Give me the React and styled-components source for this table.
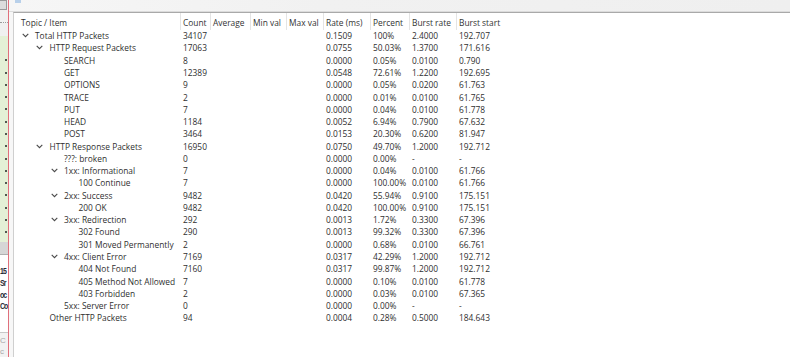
import React from 'react';
import styled, { createGlobalStyle } from 'styled-components';

const GlobalStyle = createGlobalStyle`
  html, body {
    margin: 0;
    padding: 0;
    background: #ffffff;
  }
  body {
    font-family: "Open Sans", "Noto Sans", sans-serif;
  }
`;

const COLS = '166px 30px 40px 36px 37px 47px 39px 47px 1fr';

const HEADERS = ['Topic / Item', 'Count', 'Average', 'Min val', 'Max val', 'Rate (ms)', 'Percent', 'Burst rate', 'Burst start'];

// level, expandable, topic, count, rate, percent, burst rate, burst start
const ROWS = [
  [0, true, 'Total HTTP Packets', '34107', '0.1509', '100%', '2.4000', '192.707'],
  [1, true, 'HTTP Request Packets', '17063', '0.0755', '50.03%', '1.3700', '171.616'],
  [2, false, 'SEARCH', '8', '0.0000', '0.05%', '0.0100', '0.790'],
  [2, false, 'GET', '12389', '0.0548', '72.61%', '1.2200', '192.695'],
  [2, false, 'OPTIONS', '9', '0.0000', '0.05%', '0.0200', '61.763'],
  [2, false, 'TRACE', '2', '0.0000', '0.01%', '0.0100', '61.765'],
  [2, false, 'PUT', '7', '0.0000', '0.04%', '0.0100', '61.778'],
  [2, false, 'HEAD', '1184', '0.0052', '6.94%', '0.7900', '67.632'],
  [2, false, 'POST', '3464', '0.0153', '20.30%', '0.6200', '81.947'],
  [1, true, 'HTTP Response Packets', '16950', '0.0750', '49.70%', '1.2000', '192.712'],
  [2, false, '???: broken', '0', '0.0000', '0.00%', '-', '-'],
  [2, true, '1xx: Informational', '7', '0.0000', '0.04%', '0.0100', '61.766'],
  [3, false, '100 Continue', '7', '0.0000', '100.00%', '0.0100', '61.766'],
  [2, true, '2xx: Success', '9482', '0.0420', '55.94%', '0.9100', '175.151'],
  [3, false, '200 OK', '9482', '0.0420', '100.00%', '0.9100', '175.151'],
  [2, true, '3xx: Redirection', '292', '0.0013', '1.72%', '0.3300', '67.396'],
  [3, false, '302 Found', '290', '0.0013', '99.32%', '0.3300', '67.396'],
  [3, false, '301 Moved Permanently', '2', '0.0000', '0.68%', '0.0100', '66.761'],
  [2, true, '4xx: Client Error', '7169', '0.0317', '42.29%', '1.2000', '192.712'],
  [3, false, '404 Not Found', '7160', '0.0317', '99.87%', '1.2000', '192.712'],
  [3, false, '405 Method Not Allowed', '7', '0.0000', '0.10%', '0.0100', '61.778'],
  [3, false, '403 Forbidden', '2', '0.0000', '0.03%', '0.0100', '67.365'],
  [2, false, '5xx: Server Error', '0', '0.0000', '0.00%', '-', '-'],
  [1, false, 'Other HTTP Packets', '94', '0.0004', '0.28%', '0.5000', '184.643'],
];

const Chevron = () => (
  <svg width="7" height="5" viewBox="0 0 7 5">
    <polyline points="0.7,0.9 3.5,3.7 6.3,0.9" fill="none" stroke="#4a4a4a" strokeWidth="1.1" />
  </svg>
);

const App = () => {
  return (
    <>
      <GlobalStyle />
      <Styled.Screen>
        <Styled.BackWindow>
          <Styled.StripButton />
          <Styled.StripPlain $h={10} />
          <Styled.Dotted />
          <Styled.StripPlain $h={14} />
          <Styled.GreenPane>
            {Array.from({ length: 15 }).map((_, i) => (
              <Styled.Dash key={i} />
            ))}
          </Styled.GreenPane>
          <Styled.GrayBand />
          <Styled.Fragments>
            <span>15</span>
            <span>Sr</span>
            <span>oc</span>
            <span>Co</span>
          </Styled.Fragments>
          <Styled.Faint>
            <span>C</span>
            <span>c</span>
          </Styled.Faint>
        </Styled.BackWindow>

        <Styled.Main>
          <Styled.TitleBar>
            <Styled.TitleIcon />
          </Styled.TitleBar>
          <Styled.Body>
            <Styled.Gutter />
            <Styled.Tree>
              <Styled.Header>
                {HEADERS.map((h, i) => (
                  <Styled.HeadCell key={h} $first={i === 0}>
                    {h}
                  </Styled.HeadCell>
                ))}
              </Styled.Header>
              {ROWS.map(([level, open, topic, count, rate, pct, brate, bstart]) => (
                <Styled.Row key={topic}>
                  <Styled.Topic $level={level}>
                    <Styled.Toggle>{open && <Chevron />}</Styled.Toggle>
                    {topic}
                  </Styled.Topic>
                  <Styled.Cell>{count}</Styled.Cell>
                  <Styled.Cell />
                  <Styled.Cell />
                  <Styled.Cell />
                  <Styled.Cell>{rate}</Styled.Cell>
                  <Styled.Cell>{pct}</Styled.Cell>
                  <Styled.Cell>{brate}</Styled.Cell>
                  <Styled.Cell>{bstart}</Styled.Cell>
                </Styled.Row>
              ))}
            </Styled.Tree>
          </Styled.Body>
        </Styled.Main>
      </Styled.Screen>
    </>
  );
};

const Styled = {
  Screen: styled.div`
    display: flex;
    width: 790px;
    height: 357px;
    overflow: hidden;
    background: #ffffff;
  `,
  BackWindow: styled.div`
    display: flex;
    flex-direction: column;
    width: 8px;
    flex: none;
    border-right: 1px solid #e0707c;
    background: #f2f2f2;
    overflow: hidden;
  `,
  StripButton: styled.div`
    height: 8px;
    margin-right: 1px;
    border: 1px solid #9a9a9a;
    border-left: none;
    background: #dcdcdc;
  `,
  StripPlain: styled.div`
    height: ${(p) => p.$h}px;
    background: #f0f0f0;
  `,
  Dotted: styled.div`
    height: 2px;
    border-bottom: 1px dotted #9a9a9a;
  `,
  GreenPane: styled.div`
    display: flex;
    flex-direction: column;
    align-items: flex-end;
    gap: 10.27px;
    height: 209px;
    padding-top: 23px;
    box-sizing: border-box;
    background: #e4f0d6;
  `,
  Dash: styled.div`
    width: 2px;
    height: 2px;
    margin-right: 1px;
    background: #505850;
    flex: none;
  `,
  GrayBand: styled.div`
    height: 12px;
    background: #d6d6d6;
    border-bottom: 1px solid #b0b0b0;
  `,
  Fragments: styled.div`
    display: flex;
    flex-direction: column;
    padding-top: 10px;
    height: 78px;
    box-sizing: border-box;
    background: #ffffff;
    font-family: "Liberation Sans", sans-serif;
    font-size: 7px;
    font-weight: bold;
    line-height: 11.7px;
    letter-spacing: -1px;
    color: #2a2a35;
    white-space: nowrap;
    span {
      display: block;
      transform: scaleY(1.3);
      transform-origin: left center;
    }
  `,
  Faint: styled.div`
    display: flex;
    flex-direction: column;
    flex: 1;
    border-top: 1px solid #c8c8c8;
    padding-top: 2px;
    font-family: "Liberation Sans", sans-serif;
    font-size: 8px;
    line-height: 11px;
    color: #a8a8a8;
  `,
  Main: styled.div`
    display: flex;
    flex-direction: column;
    flex: 1;
    min-width: 0;
  `,
  TitleBar: styled.div`
    position: relative;
    height: 12px;
    flex: none;
    background: linear-gradient(to right, #f6f6f6 0%, #f1f1f1 40%, #efefef 100%);
    border-bottom: 1px solid #dcdcdc;
    box-sizing: border-box;
  `,
  TitleIcon: styled.div`
    position: absolute;
    left: 6px;
    top: 0;
    width: 6px;
    height: 3px;
    background: #b8d0ea;
  `,
  Body: styled.div`
    display: flex;
    flex: 1;
  `,
  Gutter: styled.div`
    width: 4px;
    flex: none;
    background: #f7f7f7;
  `,
  Tree: styled.div`
    flex: 1;
    border-top: 1px solid #a9a9a9;
    border-left: 1px solid #cfcfcf;
    background: #ffffff;
    font-family: "Open Sans", "Noto Sans", sans-serif;
    font-size: 8.4px;
    color: #2f2f2f;
  `,
  Header: styled.div`
    display: grid;
    grid-template-columns: ${COLS};
    height: 16.6px;
    align-items: stretch;
  `,
  HeadCell: styled.div`
    display: flex;
    align-items: center;
    padding-top: 2px;
    padding-left: ${(p) => (p.$first ? '7px' : '2px')};
    border-left: ${(p) => (p.$first ? 'none' : '1px solid #e4e4e4')};
    white-space: nowrap;
    color: #333333;
  `,
  Row: styled.div`
    display: grid;
    grid-template-columns: ${COLS};
    height: 12.27px;
    align-items: center;
  `,
  Topic: styled.div`
    display: flex;
    align-items: center;
    padding-left: ${(p) => 7 + p.$level * 14.5}px;
    white-space: nowrap;
  `,
  Toggle: styled.span`
    display: flex;
    align-items: center;
    width: 14px;
    flex: none;
    svg {
      margin-left: 0.5px;
    }
  `,
  Cell: styled.div`
    padding-left: 3px;
    white-space: nowrap;
  `,
};

export default App;
